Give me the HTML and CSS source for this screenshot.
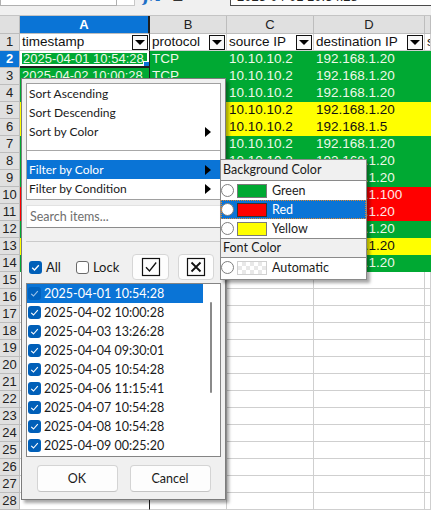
FILE: index.html
```html
<!DOCTYPE html>
<html>
<head>
<meta charset="utf-8">
<link rel="stylesheet" href="styles.css">
</head>
<body>
<div class="toolbar">
  <div class="tb-inner">
    <div class="namebox"></div>
    <div class="namebtn"></div>
    <div class="tb-icons"><span class="fx">fx</span><span class="sigma">Σ</span><span class="eq">=</span></div>
    <div class="formula">2025-04-01 10:54:28</div>
  </div>
</div>

<div class="sheet">
  <div class="row hdr"><div class="rh"></div><div class="c a sel">A</div><div class="c">B</div><div class="c">C</div><div class="c">D</div><div class="c"></div></div>
  <div class="row r1"><div class="rh">1</div><div class="c a"><span>timestamp</span><i class="dd"></i></div><div class="c"><span>protocol</span><i class="dd"></i></div><div class="c"><span>source IP</span><i class="dd"></i></div><div class="c"><span>destination IP</span><i class="dd"></i></div><div class="c"><span>s</span></div></div>
  <div class="row g"><div class="rh sel">2</div><div class="c a cur">2025-04-01 10:54:28</div><div class="c">TCP</div><div class="c">10.10.10.2</div><div class="c">192.168.1.20</div><div class="c"></div></div>
  <div class="row g"><div class="rh">3</div><div class="c a">2025-04-02 10:00:28</div><div class="c">TCP</div><div class="c">10.10.10.2</div><div class="c">192.168.1.20</div><div class="c"></div></div>
  <div class="row g"><div class="rh">4</div><div class="c a">2025-04-03 13:26:28</div><div class="c">TCP</div><div class="c">10.10.10.2</div><div class="c">192.168.1.20</div><div class="c"></div></div>
  <div class="row y"><div class="rh">5</div><div class="c a">2025-04-04 09:30:01</div><div class="c">TCP</div><div class="c">10.10.10.2</div><div class="c">192.168.1.20</div><div class="c"></div></div>
  <div class="row y"><div class="rh">6</div><div class="c a">2025-04-05 10:54:28</div><div class="c">TCP</div><div class="c">10.10.10.2</div><div class="c">192.168.1.5</div><div class="c"></div></div>
  <div class="row g"><div class="rh">7</div><div class="c a">2025-04-06 11:15:41</div><div class="c">TCP</div><div class="c">10.10.10.2</div><div class="c">192.168.1.20</div><div class="c"></div></div>
  <div class="row g"><div class="rh">8</div><div class="c a">2025-04-07 10:54:28</div><div class="c">TCP</div><div class="c">10.10.10.2</div><div class="c">192.168.1.20</div><div class="c"></div></div>
  <div class="row g"><div class="rh">9</div><div class="c a">2025-04-08 10:54:28</div><div class="c">TCP</div><div class="c">10.10.10.2</div><div class="c">192.168.1.20</div><div class="c"></div></div>
  <div class="row r"><div class="rh">10</div><div class="c a">2025-04-09 00:25:20</div><div class="c">TCP</div><div class="c">10.10.10.2</div><div class="c">192.168.1.100</div><div class="c"></div></div>
  <div class="row r"><div class="rh">11</div><div class="c a">2025-04-10 10:54:28</div><div class="c">TCP</div><div class="c">10.10.10.2</div><div class="c">192.168.1.20</div><div class="c"></div></div>
  <div class="row g"><div class="rh">12</div><div class="c a">2025-04-11 10:54:28</div><div class="c">TCP</div><div class="c">10.10.10.2</div><div class="c">192.168.1.20</div><div class="c"></div></div>
  <div class="row y"><div class="rh">13</div><div class="c a">2025-04-12 10:54:28</div><div class="c">TCP</div><div class="c">10.10.10.2</div><div class="c">192.168.1.20</div><div class="c"></div></div>
  <div class="row g"><div class="rh">14</div><div class="c a">2025-04-13 10:54:28</div><div class="c">TCP</div><div class="c">10.10.10.2</div><div class="c">192.168.1.20</div><div class="c"></div></div>
  <div class="row"><div class="rh">15</div><div class="c a"></div><div class="c"></div><div class="c"></div><div class="c"></div><div class="c"></div></div>
  <div class="row"><div class="rh">16</div><div class="c a"></div><div class="c"></div><div class="c"></div><div class="c"></div><div class="c"></div></div>
  <div class="row"><div class="rh">17</div><div class="c a"></div><div class="c"></div><div class="c"></div><div class="c"></div><div class="c"></div></div>
  <div class="row"><div class="rh">18</div><div class="c a"></div><div class="c"></div><div class="c"></div><div class="c"></div><div class="c"></div></div>
  <div class="row"><div class="rh">19</div><div class="c a"></div><div class="c"></div><div class="c"></div><div class="c"></div><div class="c"></div></div>
  <div class="row"><div class="rh">20</div><div class="c a"></div><div class="c"></div><div class="c"></div><div class="c"></div><div class="c"></div></div>
  <div class="row"><div class="rh">21</div><div class="c a"></div><div class="c"></div><div class="c"></div><div class="c"></div><div class="c"></div></div>
  <div class="row"><div class="rh">22</div><div class="c a"></div><div class="c"></div><div class="c"></div><div class="c"></div><div class="c"></div></div>
  <div class="row"><div class="rh">23</div><div class="c a"></div><div class="c"></div><div class="c"></div><div class="c"></div><div class="c"></div></div>
  <div class="row"><div class="rh">24</div><div class="c a"></div><div class="c"></div><div class="c"></div><div class="c"></div><div class="c"></div></div>
  <div class="row"><div class="rh">25</div><div class="c a"></div><div class="c"></div><div class="c"></div><div class="c"></div><div class="c"></div></div>
  <div class="row"><div class="rh">26</div><div class="c a"></div><div class="c"></div><div class="c"></div><div class="c"></div><div class="c"></div></div>
  <div class="row"><div class="rh">27</div><div class="c a"></div><div class="c"></div><div class="c"></div><div class="c"></div><div class="c"></div></div>
  <div class="row"><div class="rh">28</div><div class="c a"></div><div class="c"></div><div class="c"></div><div class="c"></div><div class="c"></div></div>
</div>

<div class="popup">
  <div class="menu">
    <div class="mi">Sort Ascending</div>
    <div class="mi">Sort Descending</div>
    <div class="mi">Sort by Color<i class="arr"></i></div>
    <div class="msep"><div class="line"></div></div>
    <div class="mi act">Filter by Color<i class="arr"></i></div>
    <div class="mi">Filter by Condition<i class="arr"></i></div>
  </div>
  <div class="search">Search items...</div>
  <div class="psep"></div>
  <div class="controls">
    <span class="cb on"><svg viewBox="0 0 13 13" width="13" height="13"><path d="M3.2 6.8 L5.5 9 L9.8 4.2" fill="none" stroke="#fff" stroke-width="1.3"/></svg></span>
    <span class="lbl">All</span>
    <span class="cb off lock"></span>
    <span class="lbl">Lock</span>
    <button class="ibtn first"><svg viewBox="0 0 20 20" width="20" height="20"><rect x="1.5" y="1.5" width="17" height="17" fill="none" stroke="#111" stroke-width="1.2"/><path d="M5 10.2 L8.5 14 L15.2 5.5" fill="none" stroke="#111" stroke-width="1.3"/></svg></button>
    <button class="ibtn"><svg viewBox="0 0 20 20" width="20" height="20"><rect x="1.5" y="1.5" width="17" height="17" fill="none" stroke="#111" stroke-width="1.2"/><path d="M5.5 5.5 L14.5 14.5 M14.5 5.5 L5.5 14.5" fill="none" stroke="#111" stroke-width="1.8"/></svg></button>
  </div>
  <div class="list">
    <div class="items">
      <div class="li hl"><span class="cb on"><svg viewBox="0 0 13 13" width="13" height="13"><path d="M3.2 6.8 L5.5 9 L9.8 4.2" fill="none" stroke="#9cc3ea" stroke-width="1.1"/></svg></span>2025-04-01 10:54:28</div>
      <div class="li"><span class="cb on"><svg viewBox="0 0 13 13" width="13" height="13"><path d="M3.2 6.8 L5.5 9 L9.8 4.2" fill="none" stroke="#fff" stroke-width="1.1"/></svg></span>2025-04-02 10:00:28</div>
      <div class="li"><span class="cb on"><svg viewBox="0 0 13 13" width="13" height="13"><path d="M3.2 6.8 L5.5 9 L9.8 4.2" fill="none" stroke="#fff" stroke-width="1.1"/></svg></span>2025-04-03 13:26:28</div>
      <div class="li"><span class="cb on"><svg viewBox="0 0 13 13" width="13" height="13"><path d="M3.2 6.8 L5.5 9 L9.8 4.2" fill="none" stroke="#fff" stroke-width="1.1"/></svg></span>2025-04-04 09:30:01</div>
      <div class="li"><span class="cb on"><svg viewBox="0 0 13 13" width="13" height="13"><path d="M3.2 6.8 L5.5 9 L9.8 4.2" fill="none" stroke="#fff" stroke-width="1.1"/></svg></span>2025-04-05 10:54:28</div>
      <div class="li"><span class="cb on"><svg viewBox="0 0 13 13" width="13" height="13"><path d="M3.2 6.8 L5.5 9 L9.8 4.2" fill="none" stroke="#fff" stroke-width="1.1"/></svg></span>2025-04-06 11:15:41</div>
      <div class="li"><span class="cb on"><svg viewBox="0 0 13 13" width="13" height="13"><path d="M3.2 6.8 L5.5 9 L9.8 4.2" fill="none" stroke="#fff" stroke-width="1.1"/></svg></span>2025-04-07 10:54:28</div>
      <div class="li"><span class="cb on"><svg viewBox="0 0 13 13" width="13" height="13"><path d="M3.2 6.8 L5.5 9 L9.8 4.2" fill="none" stroke="#fff" stroke-width="1.1"/></svg></span>2025-04-08 10:54:28</div>
      <div class="li"><span class="cb on"><svg viewBox="0 0 13 13" width="13" height="13"><path d="M3.2 6.8 L5.5 9 L9.8 4.2" fill="none" stroke="#fff" stroke-width="1.1"/></svg></span>2025-04-09 00:25:20</div>
    </div>
    <div class="scroll"><div class="thumb"></div></div>
  </div>
  <div class="actions">
    <button class="btn">OK</button>
    <button class="btn">Cancel</button>
  </div>
</div>

<div class="submenu">
  <div class="sh">Background Color</div>
  <div class="si"><span class="radio"></span><span class="sw green"></span>Green</div>
  <div class="si act"><span class="radio"></span><span class="sw red"></span>Red</div>
  <div class="si"><span class="radio"></span><span class="sw yellow"></span>Yellow</div>
  <div class="sh mid">Font Color</div>
  <div class="si"><span class="radio"></span><span class="sw auto"></span>Automatic</div>
</div>
</body>
</html>
```

FILE: styles.css
```css
* { box-sizing: border-box; margin: 0; padding: 0; }
html, body { width: 431px; height: 511px; overflow: hidden; background: #fff; }
body { font-family: "Liberation Sans", Arial, sans-serif; position: relative; }

/* toolbar (only the bottom of it is visible) */
.toolbar { height: 16px; background: #f0f0f0; overflow: hidden; border-bottom: 1px solid #c4c4c4; }
.tb-inner { display: flex; height: 20px; margin-top: -14px; }
.namebox { width: 117px; background: #fff; border: 1px solid #b0b0b0; }
.namebtn { width: 18px; background: #fff; border: 1px solid #c8c8c8; border-left: none; }
.tb-icons { width: 95px; display: flex; align-items: flex-start; padding-left: 8px; padding-top: 1px; gap: 12px; font-size: 17px; line-height: 17px; }
.fx { color: #1d6fc6; font-style: italic; font-family: "DejaVu Serif", serif; font-weight: bold; }
.sigma { color: #333; }
.eq { color: #666; }
.formula { flex: 1; background: #fff; border: 1px solid #4a4a4a; border-right: none; font-size: 13px; line-height: 13px; padding-top: 3px; padding-left: 6px; color: #222; overflow: hidden; }

/* sheet grid */
.row { display: grid; grid-template-columns: 20px 130px 77px 87px 111px 1fr; height: 17px; }
.row.hdr { height: 18px; }
.c, .rh { border-right: 1px solid #cfcfcf; border-bottom: 1px solid #cfcfcf; font-size: 13.5px; line-height: 16px; white-space: nowrap; overflow: hidden; padding-left: 2px; color: #111; }
.c.a { border-right: 1px solid #1e1e1e; font-size: 13px; }
.rh { background: #e0e0e0; border-color: #bdbdbd; text-align: center; padding-left: 0; font-size: 13px; color: #222; }
.hdr .c { background: #e0e0e0; border-color: #bdbdbd; text-align: center; padding-left: 0; font-size: 13px; line-height: 17px; color: #222; }
.hdr .c.a { border-right: 2px solid #1e1e1e; }
.sel { background: #0a74d6 !important; color: #fff !important; font-weight: bold; }

.r1 .c { display: flex; align-items: center; justify-content: space-between; padding-right: 1px; font-size: 13.5px; }
.dd { width: 16px; height: 15px; border: 1px solid #111; background: #f8f8f8; display: flex; align-items: center; justify-content: center; flex: none; }
.dd::after { content: ""; border-left: 5px solid transparent; border-right: 5px solid transparent; border-top: 5px solid #000; }

.row.g .c { background: #00a933; color: #eef8e8; border-color: #00a933; }
.row.y .c { background: #ffff00; color: #111; border-color: #ffff00; }
.row.r .c { background: #ff0000; color: #ffe8e8; border-color: #ff0000; }
.row.g .c.a, .row.y .c.a, .row.r .c.a { border-right-color: #1e1e1e; }
.cur { position: relative; box-shadow: inset 0 0 0 2px #fff; border-bottom: 2px solid #1e1e1e !important; line-height: 15px; padding-left: 3px; }
.cur::after { content: ""; position: absolute; right: -1px; bottom: -2px; width: 5px; height: 5px; background: #0a74d6; border: 1px solid #fff; }

/* autofilter popup */
.popup { position: absolute; left: 21px; top: 78px; width: 205px; height: 422px; background: #f0f0f0; border: 1px solid #7c7c7c; box-shadow: 3px 3px 3px rgba(0,0,0,.35); padding: 4px 4px 0 4px; display: flex; flex-direction: column; font-family: Lato, "Open Sans", sans-serif; font-size: 12px; color: #1a1a1a; }
.menu { background: #fff; border: 1px solid #a0a0a0; height: 117px; }
.mi { height: 19px; line-height: 19px; padding-left: 2px; display: flex; align-items: center; justify-content: space-between; padding-right: 9px; }
.mi.act { background: #0a74d6; color: #fff; }
.arr { border-left: 6px solid #000; border-top: 5px solid transparent; border-bottom: 5px solid transparent; }
.msep { height: 19px; padding-top: 9px; }
.msep .line { height: 1px; background: #a8a8a8; }
.search { margin-top: 5px; height: 23px; background: #fff; border: 1px solid #e2e2e2; border-bottom: 1px solid #8c8c8c; color: #6e6e6e; padding-left: 3px; line-height: 21px; font-size: 12.5px; }
.psep { margin-top: 13px; height: 1px; background: #cacaca; }
.controls { margin-top: 12px; height: 26px; display: flex; align-items: center; }
.cb { width: 13px; height: 13px; border-radius: 3px; flex: none; display: block; }
.cb svg { display: block; }
.cb.on { background: #005fb8; }
.cb.off { background: #fff; border: 1px solid #6a6a6a; }
.controls > .cb:first-child { margin-left: 3px; }
.lbl { margin-left: 4px; font-size: 13px; }
.lock { margin-left: 15px; }
.ibtn { width: 37px; height: 26px; background: #fdfdfd; border: 1px solid #d6d6d6; border-radius: 4px; display: flex; align-items: center; justify-content: center; }
.ibtn.first { margin-left: auto; margin-right: 9px; }
.ibtn:last-child { width: 36px; margin-right: 7px; }
.list { margin-top: 3px; height: 174px; background: #fff; border: 1px solid #848484; display: flex; }
.items { width: 176px; }
.li { height: 19px; display: flex; align-items: center; gap: 3px; padding-left: 1px; font-size: 12.5px; color: #1b1b1b; }
.li.hl { background: #0a74d6; color: #fff; }
.li.hl .cb.on { background: #0062bf; }
.scroll { flex: 1; padding-top: 18px; padding-left: 7px; }
.thumb { width: 2px; height: 91px; background: #8a8a8a; border-radius: 1px; }
.actions { margin-top: 8px; display: flex; justify-content: center; gap: 12px; }
.btn { width: 81px; height: 27px; background: #fdfdfd; border: 1px solid #d4d4d4; border-bottom-color: #c4c4c4; border-radius: 4px; font-family: Lato, "Open Sans", sans-serif; font-size: 12.5px; color: #1a1a1a; }

/* submenu */
.submenu { position: absolute; left: 220px; top: 159px; width: 147px; height: 121px; background: #fff; border: 1px solid #8a8a8a; box-shadow: 3px 3px 3px rgba(0,0,0,.35); font-family: Lato, "Open Sans", sans-serif; font-size: 12.5px; color: #1a1a1a; }
.sh { height: 21px; line-height: 20px; background: #f0f0f0; border-bottom: 1px solid #8a8a8a; padding-left: 2px; }
.sh.mid { height: 20px; border-top: 1px solid #8a8a8a; line-height: 18px; }
.si { height: 19px; display: flex; align-items: center; }
.si.act { background: #0a74d6; color: #fff; outline: 1px dotted #e2892f; outline-offset: -1px; }
.radio { width: 13px; height: 13px; border-radius: 50%; border: 1px solid #7e7e7e; background: #fff; flex: none; }
.sw { width: 30px; height: 14px; margin-left: 3px; margin-right: 5px; border: 1px solid #7a7a7a; flex: none; }
.sw.green { background: #00a933; }
.sw.red { background: #ff0000; border-color: #333; }
.sw.yellow { background: #ffff00; }
.sw.auto { background: repeating-conic-gradient(#e8e8e8 0 25%, #fff 0 50%) 0 0 / 8px 8px; border-color: #d0d0d0; }
```
